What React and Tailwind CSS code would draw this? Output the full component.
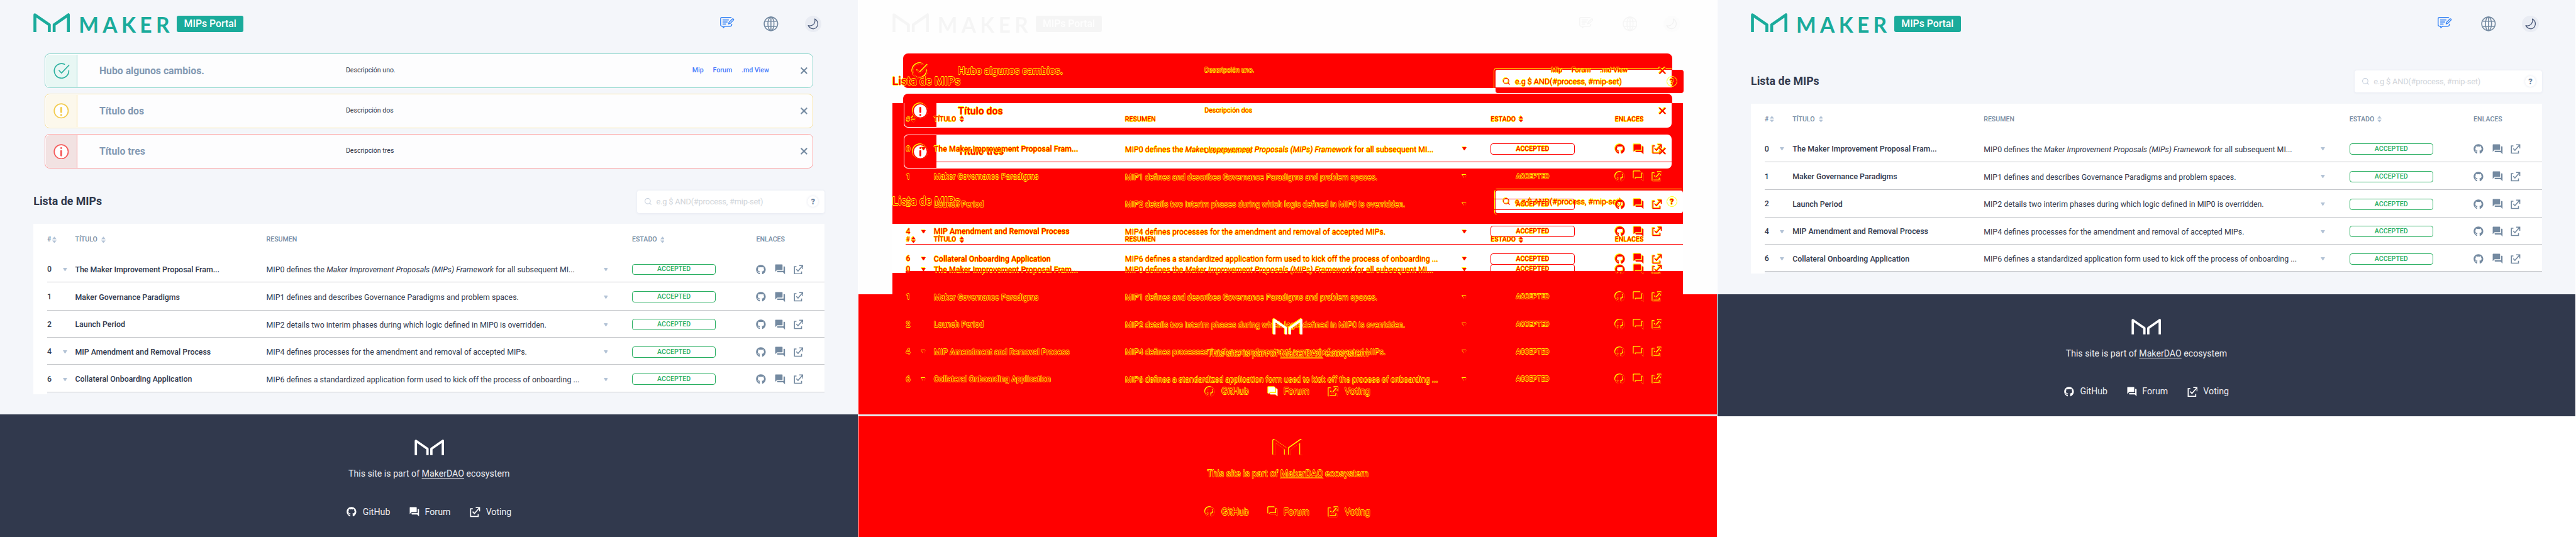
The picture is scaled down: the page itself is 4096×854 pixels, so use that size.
import React from "react";
import { FaGithub } from "react-icons/fa";
import { MdForum } from "react-icons/md";
import { Search, X } from "lucide-react";

const YELLOW_EDGE =
  "[text-shadow:0.6px_0_#ff0,-0.6px_0_#ff0,0_0.6px_#ff0,0_-0.6px_#ff0]";
const YELLOW_RIM = "[filter:drop-shadow(0.7px_0.7px_0_#ff0)_drop-shadow(-0.7px_-0.7px_0_#ff0)]";

function MakerMark({ className }) {
  return (
    <svg viewBox="0 0 58.7 31" className={className} fill="none" stroke="currentColor" strokeWidth="4.7" strokeLinejoin="round">
      <path d="M2.4 31V2.6L25.6 18.6V31M33.4 31V18.6L56.3 2.6V31" />
    </svg>
  );
}

function VotingIcon({ className }) {
  return (
    <svg viewBox="0 0 16 16" className={className} fill="none" stroke="currentColor" strokeWidth="1.6">
      <path d="M4.5 3H1.3v11.7h11.4V11M9 1.2h5.8V7M14.5 1.5L7 10.2 4.3 7.3" />
    </svg>
  );
}

function FeedbackIcon() {
  return (
    <svg viewBox="0 0 23 19" className="h-[19px] w-[23px] text-[#3583f5]" fill="none" stroke="currentColor" strokeWidth="1.4" strokeLinecap="round" strokeLinejoin="round">
      <path d="M18 1.2Q17.500 .8 16.500 .8H3Q.8 .8 .8 3V12.500Q.8 14.900 3 14.900H5V17.500L8 14.900H16.500Q18.800 14.900 18.800 12.500V11.500" />
      <path d="M4.500 4.800H13.500M4.500 8.100H11.500M4.500 11.400H9" />
      <path d="M13.600 11.300L14.400 8.500 20 3Q21 2.600 21.800 3.700 22.200 4.600 21.400 5.200L16 10.600Z" />
    </svg>
  );
}

function GlobeIcon() {
  return (
    <svg viewBox="0 0 24 24" className="size-[24px] text-[#748aa1]" fill="none" stroke="currentColor" strokeWidth="1.6">
      <circle cx="12" cy="12" r="10.900" />
      <ellipse cx="12" cy="12" rx="4.900" ry="10.900" />
      <path d="M12 1V23M2.500 7.800H21.500M2.500 16.200H21.500" />
    </svg>
  );
}

function MoonIcon() {
  return (
    <svg viewBox="0 0 18 18" className="size-[18px] text-[#4c5b7b]" fill="none" stroke="currentColor" strokeWidth="1.3" strokeLinejoin="round">
      <path d="M11.700 1.200Q16.800 4 16.600 9.600 15.600 16.400 9.500 17 3.600 16.900 1.200 11.800 6.500 13.200 10 9.500 12.900 6 11.700 1.200Z" />
    </svg>
  );
}

function SortIcon({ diff }) {
  return (
    <svg viewBox="0 0 7 11" className={`h-[11px] w-[7px] ${diff ? `text-[#f00] ${YELLOW_RIM}` : "text-[#b3c3d6]"}`} fill="currentColor">
      <path d="M3.500 .3L7 4.500H0ZM3.500 10.700L0 6.500H7Z" />
    </svg>
  );
}

function Arrow({ diff }) {
  return (
    <svg viewBox="0 0 7 5" className={`h-[5px] w-[7px] ${diff ? `text-[#f00] ${YELLOW_RIM}` : "text-[#b3c3d6]"}`} fill="currentColor">
      <path d="M0 0H7L4 5H3Z" />
    </svg>
  );
}

function AlertIcon({ kind, diff }) {
  const rim = diff ? YELLOW_RIM : "";
  if (kind === "success") {
    return (
      <svg viewBox="0 0 26 26" className={`size-[26px] ${diff ? "text-[#f00]" : "text-[#2bb19f]"} ${rim}`} fill="none" stroke="currentColor" strokeWidth="1.7" strokeLinecap="round" strokeLinejoin="round">
        <path d="M17.800 2.200A11.700 11.700 0 1 0 24.700 12.400" />
        <path d="M9 12.200L13 16.300 25 3.800" />
      </svg>
    );
  }
  const warning = kind === "warning";
  const color = diff ? "text-[#f00]" : warning ? "text-[#f2cb4d]" : "text-[#f55a5a]";
  return (
    <svg viewBox="0 0 25 25" className={`size-[25px] ${color} ${rim}`} fill="none" stroke="currentColor" strokeWidth="1.7" strokeLinecap="round">
      <circle cx="12.500" cy="12.500" r="11.300" className="fill-white" />
      {warning ? (
        <path d="M12.500 7.500V14.500M12.500 19V19.200" strokeWidth="3" />
      ) : (
        <path d="M12.500 11.500V18.500M12.500 6.500V6.700" strokeWidth="3" />
      )}
    </svg>
  );
}

function Header({ hidden, ghost, tall }) {
  const tone = hidden ? "invisible" : ghost ? "opacity-[0.07] grayscale" : "";
  return (
    <header className={`flex items-start justify-between pl-[54px] pr-[59px] ${tall ? "h-[86px]" : "h-[78px]"} ${tone}`}>
      <div className="flex items-end pt-[21px] text-[#1aab9b]">
        <MakerMark className="h-[31px] w-[59px]" />
        <span className="ml-[14px] h-[31px] w-[158px] whitespace-nowrap font-['Lato'] text-[34px] font-bold leading-[37px] tracking-[6.4px]">MAKER</span>
        <span className="flex h-[27px] w-[107px] items-center justify-center rounded-[3px] bg-[#1aab9b] text-[16px] font-medium text-white">MIPs Portal</span>
      </div>
      <div className="flex items-center pt-[25px]">
        <span className="-mt-[4px]"><FeedbackIcon /></span>
        <span className="ml-[47px]"><GlobeIcon /></span>
        <span className="ml-[42px] flex size-[27px] items-center justify-center rounded-full bg-[#e9ecf3]"><MoonIcon /></span>
      </div>
    </header>
  );
}

const ALERTS = [
  { kind: "success", title: "Hubo algunos cambios.", text: "Descripción uno.", links: ["Mip", "Forum", ".md View"], frame: "border-[#8ad5cb]", box: "bg-[#e8f7f4] border-[#8ad5cb]" },
  { kind: "warning", title: "Título dos", text: "Descripción dos", links: [], frame: "border-[#f8e2a0]", box: "bg-[#fcf8ec] border-[#f8dd90]" },
  { kind: "danger", title: "Título tres", text: "Descripción tres", links: [], frame: "border-[#fba3a3]", box: "bg-[#f2e2e2] border-[#f99393]" },
];

function Alerts({ diff }) {
  const ink = diff ? `text-[#f00] ${YELLOW_EDGE}` : "";
  return (
    <div className="flex flex-col gap-[9px] pl-[72px] pr-[72px]">
      {ALERTS.map((a) => (
        <div key={a.kind} className={`flex h-[56px] items-center rounded-[8px] border p-px ${diff ? "border-transparent" : `bg-[#fdfdfe] ${a.frame}`}`}>
          <div className={`flex h-[52px] w-[51px] items-center justify-center rounded-l-[6px] border-r-2 ${diff ? "border-transparent" : a.box}`}>
            <AlertIcon kind={a.kind} diff={diff} />
          </div>
          <div className={`ml-[35px] w-[397px] text-[16px] font-bold ${diff ? ink : "text-[#8299b3]"}`}>{a.title}</div>
          <div className={`w-[558px] pb-[2px] text-[10.75px] ${diff ? ink : "text-[#31394d]"}`}>{a.text}</div>
          <div className={`flex w-[171px] gap-[15px] whitespace-nowrap pb-[2px] text-[10.75px] font-medium ${diff ? ink : "text-[#447afb]"}`}>
            {a.links.map((l) => <span key={l}>{l}</span>)}
          </div>
          <X strokeWidth={3} className={`size-[17px] ${diff ? `text-[#f00] ${YELLOW_RIM}` : "text-[#748aa1]"}`} />
        </div>
      ))}
    </div>
  );
}

function Titlebar({ diff }) {
  return (
    <div className="flex h-[89px] items-start justify-between pl-[54px] pr-[54px] pt-[35px]">
      <h2 className={`flex h-[36px] items-center text-[18px] font-bold ${diff ? `text-[#f00] ${YELLOW_EDGE}` : "text-[#31394d]"}`}>Lista de MIPs</h2>
      <div className={`flex h-[36px] w-[302px] items-center rounded-[4px] pl-[11px] pr-[10px] ${diff ? "text-[#f00]" : "bg-white text-[#d0d4d9] shadow-[0_1px_4px_rgba(60,80,140,0.08)]"}`}>
        <Search className={`size-[13px] ${diff ? YELLOW_RIM : "text-[#c3cddb]"}`} />
        <span className={`ml-[7px] whitespace-nowrap text-[13px] tracking-[-0.2px] ${diff ? YELLOW_EDGE : ""}`}>e.g $ AND(#process, #mip-set)</span>
        <span className={`ml-auto flex size-[17px] items-center justify-center rounded-full text-[13px] font-black ${diff ? `border border-[#ff0] ${YELLOW_EDGE}` : "text-[#6f87a3] shadow-[0_0_4px_rgba(60,80,140,0.16)]"}`}>?</span>
      </div>
    </div>
  );
}

const ROWS = [
  { n: 0, open: true, title: "The Maker Improvement Proposal Fram...", text: <>MIP0 defines the <em>Maker Improvement Proposals (MIPs) Framework</em> for all subsequent MI...</>, h: "h-[44px]" },
  { n: 1, open: false, title: "Maker Governance Paradigms", text: "MIP1 defines and describes Governance Paradigms and problem spaces.", h: "h-[45px]" },
  { n: 2, open: false, title: "Launch Period", text: "MIP2 details two interim phases during which logic defined in MIP0 is overridden.", h: "h-[44px]" },
  { n: 4, open: true, title: "MIP Amendment and Removal Process", text: "MIP4 defines processes for the amendment and removal of accepted MIPs.", h: "h-[44px]" },
  { n: 6, open: true, title: "Collateral Onboarding Application", text: "MIP6 defines a standardized application form used to kick off the process of onboarding ...", h: "h-[44px]" },
];

const COLS = "grid grid-cols-[25px_20px_308px_543px_46px_200px_1fr] items-center whitespace-nowrap";

function MipTable({ diff }) {
  const dark = diff ? `text-[#f00] ${YELLOW_EDGE}` : "text-[#31394d]";
  const head = diff ? `text-[#f00] ${YELLOW_EDGE}` : "text-[#748aa1]";
  const icon = diff ? `text-[#f00] ${YELLOW_RIM}` : "text-[#748aa1]";
  return (
    <div className="flex h-[307px] items-start px-[54px]">
      <div className={`h-[274px] w-[22px] ${diff ? "" : "bg-white"}`} />
      <div className={`w-[1252px] ${diff ? "" : "bg-white"}`}>
        <div className={`${COLS} h-[50px] text-[10.75px] font-medium ${head}`}>
          <span className="col-span-2 flex items-center gap-[2px]">#<SortIcon diff={diff} /></span>
          <span className="flex items-center gap-[6px]">TÍTULO<SortIcon diff={diff} /></span>
          <span className="col-span-2">RESUMEN</span>
          <span className="flex items-center gap-[5px]">ESTADO<SortIcon diff={diff} /></span>
          <span>ENLACES</span>
        </div>
        {ROWS.map((r) => (
          <div key={r.n} className={`${COLS} ${r.h} border-b pt-[3px] text-[12.55px] ${diff ? "border-[#f00]" : "border-[#c4c6ca]"} ${dark}`}>
            <span className="font-medium">{r.n}</span>
            <span>{r.open && <Arrow diff={diff} />}</span>
            <span className="pt-px font-medium">{r.title}</span>
            <span className="pt-[2px]">{r.text}</span>
            <Arrow diff={diff} />
            <span className={`flex h-[18px] w-[135px] items-center justify-center rounded-[4px] border text-[10.75px] font-medium ${diff ? "border-[#f00]" : "border-[#27ae60] text-[#27ae60]"}`}>ACCEPTED</span>
            <span className={`flex items-center ${icon}`}>
              <FaGithub className="size-[16px]" />
              <MdForum className="ml-[13px] size-[19px]" />
              <VotingIcon className="ml-[12px] size-[16px]" />
            </span>
          </div>
        ))}
      </div>
    </div>
  );
}

function Footer({ diff, whiteMark }) {
  const tone = diff ? "text-[#f00]" : "bg-[#31394d]";
  const ink = diff ? YELLOW_EDGE : "text-[#ececf0]";
  const icon = diff ? YELLOW_RIM : "text-white";
  const mark = diff ? `${YELLOW_RIM} ${whiteMark ? "text-white" : "text-[#f00]"}` : "text-white";
  return (
    <footer className={`flex h-[197px] flex-col items-center pt-[40px] ${tone}`}>
      <MakerMark className={`h-[25px] w-[48px] ${mark}`} />
      <p className={`mt-[19px] text-[14.35px] leading-[24px] ${ink}`}>
        This site is part of <span className="underline underline-offset-2">MakerDAO</span> ecosystem
      </p>
      <div className={`mt-[37px] flex h-[24px] items-center text-[14.35px] ${ink}`}>
        <FaGithub className={`size-[16px] ${icon}`} />
        <span className="ml-[10px]">GitHub</span>
        <MdForum className={`ml-[30px] size-[18px] ${whiteMark ? "text-white" : ""} ${icon}`} />
        <span className="ml-[8px]">Forum</span>
        <VotingIcon className={`ml-[31px] size-[17px] ${icon}`} />
        <span className="ml-[9px]">Voting</span>
      </div>
    </footer>
  );
}

function Screen({ alerts }) {
  return (
    <div className="w-[1382px] bg-[#f4f6fa]">
      <Header tall={alerts} />
      {alerts && <Alerts />}
      <Titlebar />
      <MipTable />
      <Footer />
    </div>
  );
}

function DiffShapes() {
  return (
    <div className="absolute inset-0">
      <div className="absolute left-[54px] top-[166px] h-[195px] w-[1274px] bg-[#f00]" />
      <div className="absolute left-[72px] top-[86px] h-[56px] w-[1238px] rounded-[8px] bg-[#f00]" />
      <div className="absolute left-[72px] top-[151px] h-[56px] w-[1238px] rounded-[8px] bg-[#f00]" />
      <div className="absolute left-[73px] top-[166px] h-[40px] w-[1236px] rounded-b-[7px] bg-white" />
      <div className="absolute left-[74px] top-[160px] h-[45px] w-[51px] rounded-bl-[6px] bg-[#f00]" />
      <div className="absolute left-[73px] top-[217px] h-[54px] w-[1236px] rounded-[7px] bg-white" />
      <div className="absolute left-[74px] top-[218px] h-[52px] w-[51px] rounded-l-[6px] bg-[#f00]" />
      <div className="absolute left-[1026px] top-[112px] h-[38px] w-[303px] rounded-[4px] bg-[#f00]" />
      <div className="absolute left-[1023px] top-[109px] h-[33px] w-[286px] rounded-tl-[5px] border-l border-t border-[#ff0]" />
      <div className="absolute left-[1026px] top-[112px] h-[29px] w-[283px] rounded-tl-[3px] bg-white" />
      <div className="absolute left-[1024px] top-[304px] h-[42px] w-[305px] rounded-[5px] border-l border-t border-[#ff0]" />
      <div className="absolute left-[1026px] top-[307px] h-[36px] w-[302px] rounded-[4px] bg-white" />
      <div className="absolute left-[54px] top-[361px] h-[79px] w-[1274px] bg-white" />
      <div className="absolute left-[76px] top-[437px] h-[37px] w-[1252px] bg-[#f00]" />
      <div className="absolute left-[54px] top-[440px] h-[34px] w-[22px] bg-[#f00]" />
      <div className="absolute left-0 top-[474px] h-[391px] w-[1382px] bg-[#f00]" />
      <div className="absolute left-0 top-[668px] h-[3px] w-[1382px] bg-[#e6e8ec]" />
    </div>
  );
}

function DiffScreen() {
  return (
    <div className="relative h-[865px] w-[1382px] bg-[#fefefe]">
      <DiffShapes />
      <div className="absolute inset-x-0 top-0">
        <Header tall ghost />
        <Alerts diff />
        <Titlebar diff />
        <MipTable diff />
        <Footer diff />
      </div>
      <div className="absolute inset-x-0 top-0">
        <Header hidden />
        <Titlebar diff />
        <MipTable diff />
        <Footer diff whiteMark />
      </div>
    </div>
  );
}

export default function App() {
  return (
    <div className="h-[854px] w-[4096px] overflow-hidden bg-white font-['Roboto',sans-serif]">
      <div className="flex h-[865px] w-[4149px] items-start gap-px [zoom:0.98725]">
        <Screen alerts />
        <DiffScreen />
        <Screen />
      </div>
    </div>
  );
}
